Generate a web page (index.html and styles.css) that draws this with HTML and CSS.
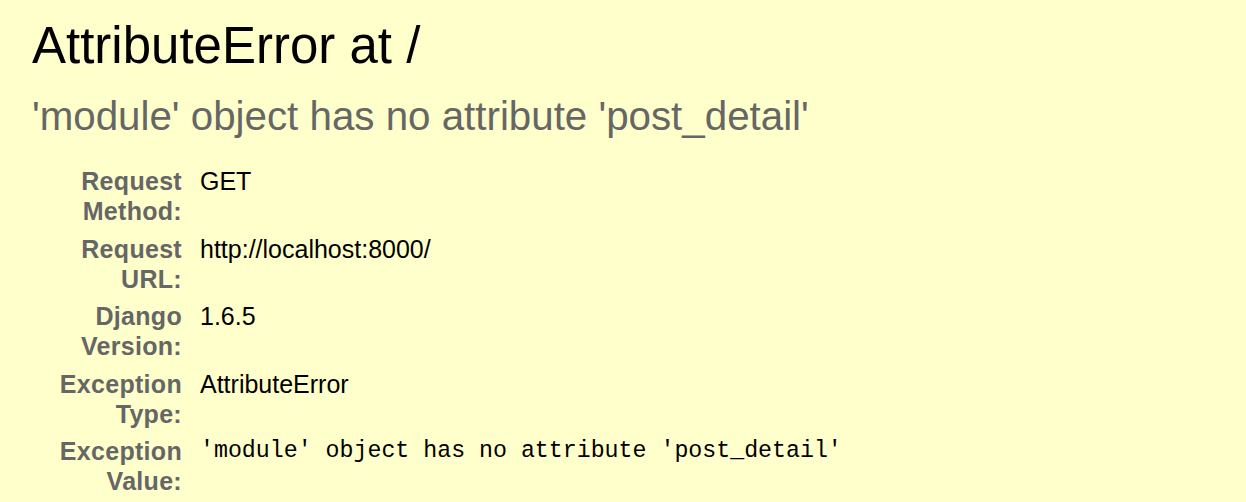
FILE: index.html
```html
<!DOCTYPE html>
<html>
<head>
<meta charset="utf-8">
<title>AttributeError at /</title>
<link rel="stylesheet" href="styles.css">
</head>
<body>
<div class="summary">
  <h1 class="title">AttributeError at /</h1>
  <pre class="exception-value">'module' object has no attribute 'post_detail'</pre>
  <div class="meta">
    <div class="key">Request Method:</div>
    <div class="val">GET</div>
    <div class="key">Request URL:</div>
    <div class="val">http://localhost:8000/</div>
    <div class="key">Django Version:</div>
    <div class="val">1.6.5</div>
    <div class="key">Exception Type:</div>
    <div class="val">AttributeError</div>
    <div class="key">Exception Value:</div>
    <div class="val"><pre class="code">'module' object has no attribute 'post_detail'</pre></div>
  </div>
</div>
</body>
</html>
```

FILE: styles.css
```css
html, body {
  margin: 0;
  padding: 0;
  background: #ffc;
}

body {
  font-family: "Liberation Sans", Arial, Helvetica, sans-serif;
  color: #000;
}

.summary {
  padding: 0 0 0 32px;
}

.title {
  margin: 17px 0 0;
  font-size: 51px;
  line-height: 58px;
  font-weight: normal;
  color: #000;
}

.exception-value {
  margin: 19.3px 0 0;
  font-family: "Liberation Sans", Arial, Helvetica, sans-serif;
  font-size: 40.3px;
  line-height: 46px;
  color: #666;
  white-space: pre-wrap;
}

.meta {
  display: grid;
  grid-template-columns: 168px 1fr;
  margin-top: 22px;
  font-size: 25px;
  line-height: 30px;
}

.key {
  text-align: right;
  font-weight: bold;
  color: #666;
  letter-spacing: 0.3px;
  padding: 4px 18px 3.5px 0;
}

.val {
  padding: 4px 0 3.5px 0;
  color: #000;
}

.code {
  margin: 0;
  font-family: "Liberation Mono", "Courier New", monospace;
  font-size: 23.25px;
  line-height: 30px;
  white-space: pre-wrap;
}
```
